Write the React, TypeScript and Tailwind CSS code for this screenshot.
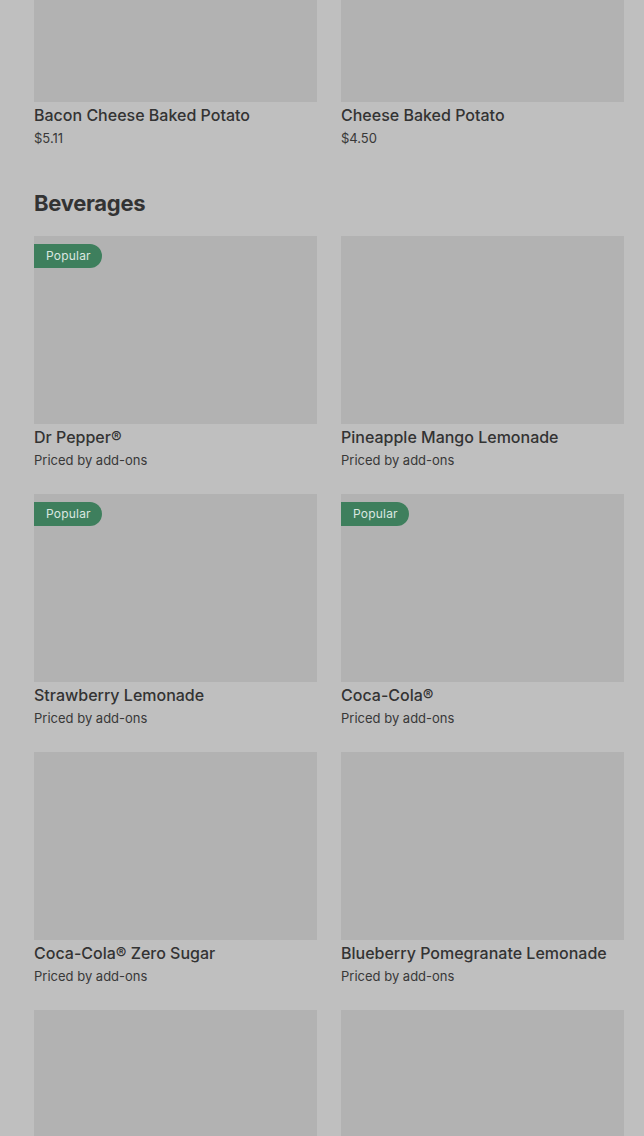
import React from "react";

type Item = { name: string; price: string; popular?: boolean };

const beverages: Item[] = [
  { name: "Dr Pepper®", price: "Priced by add-ons", popular: true },
  { name: "Pineapple Mango Lemonade", price: "Priced by add-ons" },
  { name: "Strawberry Lemonade", price: "Priced by add-ons", popular: true },
  { name: "Coca-Cola®", price: "Priced by add-ons", popular: true },
  { name: "Coca-Cola® Zero Sugar", price: "Priced by add-ons" },
  { name: "Blueberry Pomegranate Lemonade", price: "Priced by add-ons" },
];

function Card({ item }: { item: Item }) {
  return (
    <div className="flex flex-col h-[258px]">
      <div className="relative bg-[#b2b2b2] h-[188px]">
        {item.popular && (
          <div className="absolute left-0 top-[8px] h-[24px] w-[68px] bg-[#3e7f5d] rounded-r-full flex items-center pl-[12px] text-[12px] text-[#dbe7e0] tracking-[0.2px]">
            Popular
          </div>
        )}
      </div>
      <div className="pt-[3px] text-[16px] leading-[20px] font-medium text-[#333333]">{item.name}</div>
      <div className="pt-[3px] text-[13px] leading-[20px] text-[#383838]">{item.price}</div>
    </div>
  );
}

export default function App() {
  return (
    <div
      className="w-[644px] h-[1136px] overflow-hidden bg-[#bfbfbf] pl-[34px] pr-[20px]"
      style={{ fontFamily: "Inter, 'Liberation Sans', sans-serif" }}
    >
      <div className="grid grid-cols-2 gap-x-[24px]">
        <div className="flex flex-col">
          <div className="bg-[#b2b2b2] h-[102px]" />
          <div className="pt-[3px] text-[16px] leading-[20px] font-medium text-[#333333]">Bacon Cheese Baked Potato</div>
          <div className="pt-[3px] text-[13px] leading-[20px] text-[#383838]">$5.11</div>
        </div>
        <div className="flex flex-col">
          <div className="bg-[#b2b2b2] h-[102px]" />
          <div className="pt-[3px] text-[16px] leading-[20px] font-medium text-[#333333]">Cheese Baked Potato</div>
          <div className="pt-[3px] text-[13px] leading-[20px] text-[#383838]">$4.50</div>
        </div>
      </div>
      <h2 className="mt-[40px] text-[22px] leading-[30px] font-bold text-[#333333] tracking-[-0.3px]">Beverages</h2>
      <div className="mt-[18px] grid grid-cols-2 gap-x-[24px]">
        {beverages.map((b) => (
          <Card key={b.name} item={b} />
        ))}
        <Card item={{ name: "", price: "" }} />
        <Card item={{ name: "", price: "" }} />
      </div>
    </div>
  );
}
